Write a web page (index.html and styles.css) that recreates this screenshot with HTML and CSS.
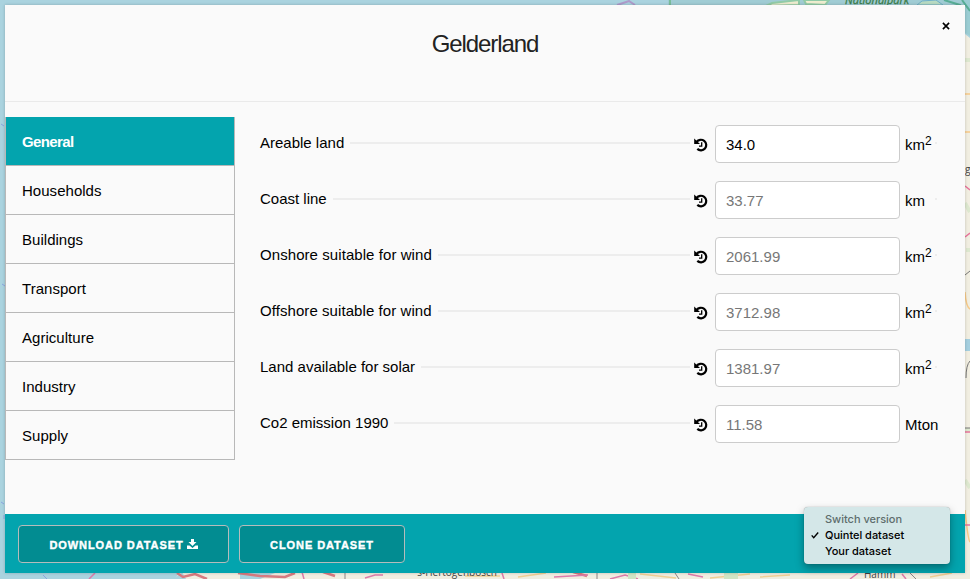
FILE: index.html
```html
<!DOCTYPE html>
<html lang="en">
<head>
<meta charset="utf-8">
<title>Gelderland</title>
<link rel="stylesheet" href="styles.css">
</head>
<body>
<svg class="map" viewBox="0 0 970 579" width="970" height="579" aria-hidden="true">
  <rect width="970" height="579" fill="#aad3df"/>
  <rect x="668" width="302" height="6" fill="#a0ccd4"/>
  <path d="M766 6L772 3L799 0L799 5ZM804 0L829 0L825 5L806 4Z" fill="#eeedcf" stroke="#91cba7" stroke-width="2"/>
  <path d="M917 5L922 1L936 0L943 5Z" fill="#b8dbc3" stroke="#6eafc9"/>
  <path d="M944 0L960 5L970 15" fill="none" stroke="#58ae96" stroke-width="2"/>
  <path d="M670 0V5" stroke="#79bd9b" stroke-width="2"/>
  <path d="M617 5L629 1L635 5" fill="none" stroke="#ae9bcb" stroke-width="2"/>
  <path d="M964 0H970V36L964 32Z" fill="#9bcdd3"/>
  <path d="M962 0L970 11" fill="none" stroke="#58ae96" stroke-width="2"/>
  <path d="M965 34L970 38V579H175L180 572H965Z" fill="#f1eee1"/>
  <path d="M965 60h5M965 203l5 9M966 250h4M965 430h5M965 480l5 8" stroke="#dde8cf" stroke-width="4"/>
  <path d="M965 94h5M965 132h5M965 292q1 15 5 17M965 510q3 30 5 32" stroke="#f7c987" fill="none" stroke-width="1.5"/>
  <path d="M965 186l5 4M965 237l5-4M965 432h5M965 525h5" stroke="#e8749c" stroke-width="1.5"/>
  <path d="M965 275l5-4M966 378q0-13 4-17M965 428h5" stroke="#777" fill="none"/>
  <path d="M965 339h5v12h-5z" fill="#a5cfdf"/>
  <path d="M240 573h35l-15 6h-20ZM182 572l4 7h-12z" fill="#aad3df"/>
  <path d="M177 573l6 4 12-3 12 5M238 573l22 3 25 1 10-4M323 572l12 4M573 572l14 4" stroke="#d77b80" stroke-width="2.5" fill="none"/>
  <path d="M89 579l6-6M302 572l2 7M365 578l10-3h8M502 573l2 6M554 577l34-2M610 579l15-4 13 4M688 574l15 3M850 579l8-6M902 574l4 5" stroke="#dc7baa" stroke-width="1.5" fill="none"/>
  <path d="M345 573v6M597 573v6M675 573l4 6M910 573l6 6" stroke="#8a8588"/>
  <path d="M465 576h35M518 577l28-4M640 574l36 4M710 578l40-4M760 577l30-2M930 577l22-4" stroke="#f0cf95" stroke-width="1.5"/>
  <path d="M628 573h8v6h-8zM724 573h14v6h-14z" fill="#d0e4c4"/>
  <path d="M1 124l3 2M2 284l3 2M1 502l3 2M4 515v4M43 575l4 4" stroke="#8aa4e0"/>
  <text class="park" x="845" y="4">Nationalpark</text>
  <text class="place" x="965" y="173">g</text>
  <text class="place" x="415" y="576">'s-Hertogenbosch</text>
  <text class="place" x="864" y="578">Hamm</text>
</svg>
<main class="modal">
  <header>
    <h1>Gelderland</h1>
    <button class="close" aria-label="Close"><svg width="8" height="8" viewBox="0 0 8 8"><path d="M.9 .9l6.2 6.2M7.1 .9L.9 7.1"/></svg></button>
  </header>
  <div class="content">
    <nav>
      <a class="active">General</a><a>Households</a><a>Buildings</a><a>Transport</a><a>Agriculture</a><a>Industry</a><a>Supply</a>
    </nav>
    <form>
      <div class="row"><label>Areable land</label><i class="line"></i><svg class="history"><use href="#history"/></svg><input value="34.0"><span class="unit">km<sup>2</sup></span><i class="dot"></i></div>
      <div class="row"><label>Coast line</label><i class="line"></i><svg class="history"><use href="#history"/></svg><input placeholder="33.77"><span class="unit">km</span><i class="dot"></i></div>
      <div class="row"><label class="wide">Onshore suitable for wind</label><i class="line"></i><svg class="history"><use href="#history"/></svg><input placeholder="2061.99"><span class="unit">km<sup>2</sup></span><i class="dot"></i></div>
      <div class="row"><label class="wide">Offshore suitable for wind</label><i class="line"></i><svg class="history"><use href="#history"/></svg><input placeholder="3712.98"><span class="unit">km<sup>2</sup></span><i class="dot"></i></div>
      <div class="row"><label>Land available for solar</label><i class="line"></i><svg class="history"><use href="#history"/></svg><input placeholder="1381.97"><span class="unit">km<sup>2</sup></span><i class="dot"></i></div>
      <div class="row"><label>Co2 emission 1990</label><i class="line"></i><svg class="history"><use href="#history"/></svg><input placeholder="11.58"><span class="unit long">Mton</span></div>
    </form>
  </div>
  <footer>
    <button class="btn download"><span>DOWNLOAD DATASET</span><svg width="11" height="10" viewBox="0 0 11 10"><path d="M4 0h3v3h2.5l-4 4-4-4H4z"/><path d="M0 6.5h2.5L5.5 9l3-2.5H11V10H0z"/></svg></button>
    <button class="btn clone"><span>CLONE DATASET</span></button>
  </footer>
</main>
<div class="menu">
  <div class="muted">Switch version</div>
  <div><svg class="check" width="8" height="8" viewBox="0 0 8 8"><path d="M.7 4.4l2 2.2L7.2 1.5"/></svg>Quintel dataset</div>
  <div>Your dataset</div>
</div>
<svg width="0" height="0" class="defs"><symbol id="history" viewBox="0 0 14 14"><path d="M2.6 4A5.3 5.3 0 1 1 3.3 10.9" fill="none" stroke="#000" stroke-width="2.2"/><path d="M.2.6L6 5.9H.2z"/><path d="M7.7 4.2v3.9H5" fill="none" stroke="#000" stroke-width="1.3"/></symbol></svg>
</body>
</html>
```
FILE: styles.css
```css
* { box-sizing: border-box; }
body { margin: 0; width: 970px; height: 579px; overflow: hidden; padding: 5px; position: relative; font: 15px "Liberation Sans", Arial, sans-serif; color: #000; }
.map { position: absolute; left: 0; top: 0; z-index: -1; }
.park { font: italic 11px "Open Sans", sans-serif; fill: #3a7d49; stroke: #3a7d49; stroke-width: .3px; }
.place { font: 10px "Open Sans", sans-serif; fill: #444; }
.defs { position: absolute; }
.modal { width: 960px; height: 568px; background: #fafafa; display: flex; flex-direction: column; box-shadow: 0 0 3px rgba(0,0,0,.2); }
header { height: 97px; border-bottom: 1px solid #eaeaea; position: relative; padding-top: 24px; }
h1 { margin: 0; text-align: center; font-size: 24px; line-height: 29px; font-weight: 400; letter-spacing: -1.07px; color: #222; }
.close { position: absolute; right: 15px; top: 17px; width: 8px; height: 8px; padding: 0; border: 0; background: none; }
.close svg { display: block; }
.close path { stroke: #000; stroke-width: 1.6; }
.content { flex: 1; display: flex; padding-top: 15px; }
nav { width: 230px; height: 343px; border: 1px solid #b8b8b8; border-top: 0; display: flex; flex-direction: column; }
nav a { height: 49px; border-bottom: 1px solid #b8b8b8; padding-left: 16px; line-height: 49px; letter-spacing: .03px; }
nav a:last-child { border-bottom: 0; }
nav .active { background: #03a4ae; color: #fff; font-weight: 700; letter-spacing: -.6px; }
form { width: 677px; margin-left: 25px; padding-top: 8px; display: flex; flex-direction: column; gap: 18px; }
.row { height: 38px; display: flex; align-items: center; }
label { margin-top: -4px; white-space: nowrap; }
.wide { letter-spacing: .07px; }
.line { height: 2px; background: #ededed; flex: 1; margin: -2px 4px 0 6px; }
.history { flex: none; width: 14px; height: 14px; margin-right: 7px; margin-top: 1px; }
input { flex: none; width: 185px; height: 38px; border: 1px solid #ccc; border-radius: 4px; background: #fff; padding: 2px 10px; font: inherit; color: #000; }
input::placeholder { color: #777; opacity: 1; }
.unit { flex: none; margin-left: 5px; width: 30px; line-height: 20px; padding-top: 2px; white-space: nowrap; }
.long { width: 32px; }
sup { font-size: 12px; line-height: 0; vertical-align: 5px; }
.dot { flex: none; width: 2px; height: 2px; background: #ededed; margin-top: -2px; }
footer { height: 59px; background: #03a4ae; display: flex; align-items: flex-start; padding: 11px 13px; gap: 10px; }
.btn { height: 38px; background: #028c91; border: 1px solid #b5bcbc; border-radius: 4px; color: #fff; font: 700 11px "Liberation Sans", Arial, sans-serif; letter-spacing: .92px; display: flex; align-items: center; justify-content: center; padding: 2px 0 0; -webkit-text-stroke: .4px #fff; }
.btn svg { fill: #fff; margin-left: 3px; margin-top: -2px; }
.download { width: 211px; }
.clone { width: 166px; }
.menu { position: absolute; left: 804px; top: 507px; width: 146px; height: 57px; padding: 4px 0; border-radius: 4px; background: #d4e7e8; box-shadow: 0 4px 9px rgba(0,0,0,.35), 0 0 1px rgba(0,0,0,.4); font: 500 11px/16px Inter, sans-serif; letter-spacing: -.02px; }
.menu div { height: 16px; padding-left: 21px; position: relative; }
.menu .muted { color: #5e6d6d; }
.check { position: absolute; left: 7px; top: 4px; fill: none; stroke: #000; stroke-width: 1.4; }
```
